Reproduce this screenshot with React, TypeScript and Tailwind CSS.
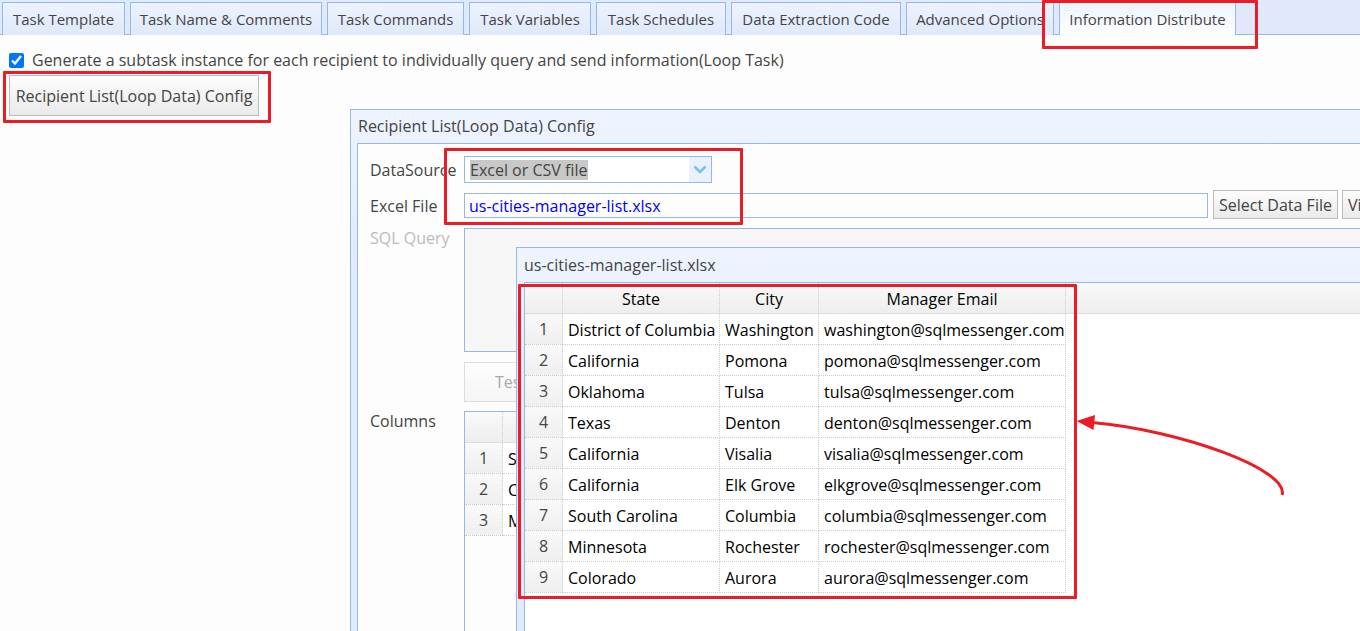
import type { ReactNode } from "react";

const tabs = [
  { label: "Task Template", width: "w-[123px]" },
  { label: "Task Name & Comments", width: "w-[192px]" },
  { label: "Task Commands", width: "w-[137px]" },
  { label: "Task Variables", width: "w-[122px]" },
  { label: "Task Schedules", width: "w-[130px]" },
  { label: "Data Extraction Code", width: "w-[170px]" },
  { label: "Advanced Options", width: "w-[148px]" },
  { label: "Information Distribute", width: "w-[177px]", active: true },
];

const managers = [
  ["District of Columbia", "Washington", "washington@sqlmessenger.com"],
  ["California", "Pomona", "pomona@sqlmessenger.com"],
  ["Oklahoma", "Tulsa", "tulsa@sqlmessenger.com"],
  ["Texas", "Denton", "denton@sqlmessenger.com"],
  ["California", "Visalia", "visalia@sqlmessenger.com"],
  ["California", "Elk Grove", "elkgrove@sqlmessenger.com"],
  ["South Carolina", "Columbia", "columbia@sqlmessenger.com"],
  ["Minnesota", "Rochester", "rochester@sqlmessenger.com"],
  ["Colorado", "Aurora", "aurora@sqlmessenger.com"],
];

const columnNames = ["State", "City", "Manager Email"];

type GridProps = { columns: { title: string; width: string }[]; rows: string[][] };

function DataGrid({ columns, rows }: GridProps) {
  return (
    <div className="bg-[linear-gradient(#f9f9f9,#eeeeee)] bg-[length:100%_30px] bg-no-repeat">
      <div className="-mb-[31px] h-[31px] border-b border-[#dddddd]" />
      <table className="relative w-max table-fixed border-separate border-spacing-0 text-black">
        <thead>
          <tr className="h-[31px]">
            <th className="w-[38px] border-r border-dotted border-r-[#cccccc]" />
            {columns.map((c) => (
              <th
                key={c.title}
                scope="col"
                className={`${c.width} border-r border-dotted border-r-[#cccccc] p-0 text-center font-normal`}
              >
                {c.title}
              </th>
            ))}
          </tr>
        </thead>
        <tbody>
          {rows.map((row, i) => (
            <tr key={i} className="h-[31px]">
              <td className="border-r border-b border-dotted border-[#cccccc] bg-linear-to-b from-[#f9f9f9] to-[#efefef] p-0 text-center text-[#444444]">
                {i + 1}
              </td>
              {row.map((cell, j) => (
                <td
                  key={j}
                  className="border-r border-b border-dotted border-[#cccccc] bg-white pt-px pr-0 pb-0 pl-[5px] whitespace-nowrap"
                >
                  {cell}
                </td>
              ))}
            </tr>
          ))}
        </tbody>
      </table>
    </div>
  );
}

type WindowProps = { title: string; place: string; header: string; body: string; children: ReactNode };

function Window({ title, place, header, body, children }: WindowProps) {
  return (
    <section
      aria-label={title}
      className={`absolute ${place} bottom-0 flex flex-col border-t border-l border-[#95b8e7] bg-linear-to-b from-[#eef4ff] to-[#e0eafd] to-[160px] pl-[6px]`}
    >
      <h2 className={`flex ${header} shrink-0 items-center pb-px pl-px`}>{title}</h2>
      <div className={`flex-1 overflow-hidden border-t border-l border-[#95b8e7] ${body}`}>{children}</div>
    </section>
  );
}

function Highlight({ place }: { place: string }) {
  return <div className={`pointer-events-none absolute ${place} rounded-[1px] border-3 border-[#ed1c24]`} />;
}

export default function App() {
  return (
    <div className="relative min-h-screen overflow-hidden bg-[#fdfdfd] font-['Open_Sans','Noto_Sans',sans-serif] text-[16px] leading-5 text-[#444444]">
      <nav
        role="tablist"
        className="flex h-[35px] gap-[5px] border-b border-[#95b8e7] bg-[#dfe9fb] pt-[2px] pl-[2px] text-[15px]"
      >
        {tabs.map((t) => (
          <button
            key={t.label}
            type="button"
            role="tab"
            aria-selected={!!t.active}
            className={`${t.width} -mb-px shrink-0 border-x border-t border-[#95b8e7] bg-linear-to-b pb-px text-center whitespace-nowrap ${
              t.active ? "from-[#eef4ff] to-[#fdfdfd]" : "from-[#edf3fe] to-[#dfe9fb]"
            }`}
          >
            {t.label}
          </button>
        ))}
      </nav>

      <main className="px-[9px] pt-[15px]">
        <label className="flex items-center gap-2">
          <input type="checkbox" defaultChecked className="size-[15px] accent-[#0075ff]" />
          Generate a subtask instance for each recipient to individually query and send information(Loop Task)
        </label>
        <button
          type="button"
          className="mt-[5px] h-[41px] w-[250px] border border-[#bbbbbb] bg-linear-to-b from-[#fdfdfd] to-[#eaeaea] whitespace-nowrap"
        >
          Recipient List(Loop Data) Config
        </button>
      </main>

      <Window
        title="Recipient List(Loop Data) Config"
        place="top-[109px] -right-[60px] left-[350px]"
        header="h-[33px]"
        body="bg-[#fdfdfd]"
      >
        <form className="grid grid-cols-[94px_1fr] pt-3 pl-3">
          <label htmlFor="source" className="pt-1">
            DataSource
          </label>
          <div className="relative w-[248px]">
            <select
              id="source"
              className="block h-[27px] w-full appearance-none border border-[#95b8e7] bg-white bg-[linear-gradient(#c8c8c8,#c8c8c8)] bg-[length:118px_20px] bg-[position:5px_3px] bg-no-repeat pl-[5px]"
            >
              <option>Excel or CSV file</option>
            </select>
            <span className="pointer-events-none absolute inset-y-px right-px flex w-[22px] items-center justify-center bg-[#e8f1fd]">
              <svg width="14" height="10" viewBox="0 0 14 10" fill="none" stroke="#7cc0f0" strokeWidth="2.6">
                <path d="M1.5 1.5 7 7l5.500-5.500" />
              </svg>
            </span>
          </div>

          <label htmlFor="file" className="pt-[13px]">
            Excel File
          </label>
          <div className="flex items-center gap-1 pt-[7px]">
            <input
              id="file"
              type="text"
              readOnly
              value="us-cities-manager-list.xlsx"
              className="mt-px mr-px h-[25px] min-w-0 flex-1 border border-[#95b8e7] bg-transparent px-1 pt-px text-[#0000ff]"
            />
            <button
              type="button"
              className="h-[29px] w-[125px] shrink-0 border border-[#bbbbbb] bg-linear-to-b from-[#fdfdfd] to-[#eaeaea] whitespace-nowrap"
            >
              Select Data File
            </button>
            <button
              type="button"
              className="h-[29px] w-[78px] shrink-0 overflow-hidden border border-[#bbbbbb] bg-linear-to-b from-[#fdfdfd] to-[#eaeaea] pl-[5px] text-left whitespace-nowrap"
            >
              View
            </button>
          </div>

          <label htmlFor="query" className="pt-[9px] text-[#bbbbbb]">
            SQL Query
          </label>
          <textarea
            id="query"
            disabled
            className="mt-[9px] block h-[124px] w-full resize-none border border-[#95b8e7] bg-[#f7f7f7]"
          />

          <button
            type="button"
            disabled
            className="col-start-2 mt-[10px] h-10 w-[94px] border border-[#dddddd] bg-linear-to-b from-[#fdfdfd] to-[#f5f5f5] pl-[30px] text-left text-[#aaaaaa]"
          >
            Test
          </button>

          <span className="pt-[9px]">Columns</span>
          <div className="mt-[9px] h-[400px] border-t border-l border-[#95b8e7]">
            <DataGrid columns={[{ title: "Name", width: "w-[160px]" }]} rows={columnNames.map((n) => [n])} />
          </div>
        </form>
      </Window>

      <Window
        title="us-cities-manager-list.xlsx"
        place="top-[247px] right-0 left-[516px]"
        header="h-[34px]"
        body="ml-px bg-white"
      >
        <DataGrid
          columns={[
            { title: "State", width: "w-[157px]" },
            { title: "City", width: "w-[99px]" },
            { title: "Manager Email", width: "w-[247px]" },
          ]}
          rows={managers}
        />
      </Window>

      <Highlight place="top-0 left-[1042px] h-[49px] w-[216px]" />
      <Highlight place="top-[71px] left-[3px] h-[52px] w-[268px]" />
      <Highlight place="top-[148px] left-[444px] h-[77px] w-[299px]" />
      <Highlight place="top-[284px] left-[518px] h-[315px] w-[559px]" />
      <svg
        aria-hidden="true"
        className="pointer-events-none absolute top-[410px] left-[1074px]"
        width="216"
        height="90"
        viewBox="1074 410 216 90"
      >
        <path d="M1092 422.500C1180 430 1290 470 1282 495" fill="none" stroke="#ed1c24" strokeWidth="3" />
        <path d="M1076.500 421 1095 415l-1.500 15z" fill="#ed1c24" />
      </svg>
    </div>
  );
}
